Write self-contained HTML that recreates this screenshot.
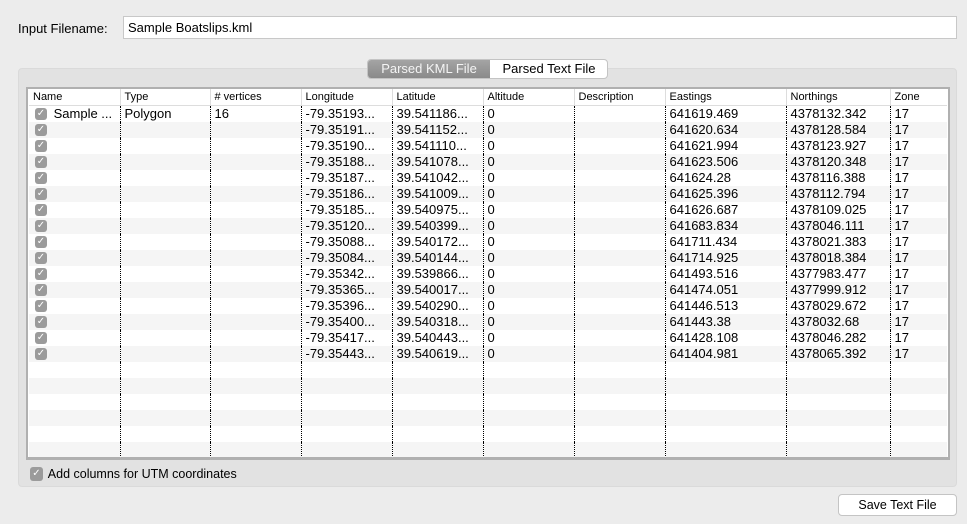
<!DOCTYPE html>
<html><head><style>
*{margin:0;padding:0;box-sizing:border-box}
body{width:967px;height:524px;background:#ececec;font-family:"Liberation Sans",sans-serif;font-size:13px;color:#000;position:relative;overflow:hidden}
.abs{position:absolute}
.cb{display:inline-block;width:12px;height:12px;background:#9b9b9b;border-radius:3px;color:#fff;font-size:10px;line-height:12px;text-align:center;vertical-align:top;margin:2px 3px 0 2px}
table{border-collapse:collapse;table-layout:fixed;position:absolute;left:1px;top:0px;width:918px}
td,th{height:16px;padding:0 4px;white-space:nowrap;overflow:hidden;font-size:13px;line-height:16px;text-align:left;font-weight:normal;border-left:1px dotted #000}
th{font-size:11px;border-left:1px solid #ddd;background:#fff;height:16px;border-bottom:1px solid #ddd}
td:first-child,th:first-child{border-left:none}
tr.s td{background:#f5f5f5}
tr td{background:#fff}
</style></head><body>
<div class="abs" style="left:18px;top:21px">Input Filename:</div>
<div class="abs" style="left:123px;top:16px;width:834px;height:23px;background:#fff;border:1px solid #c8c8c8;padding:3px 0 0 4px">Sample Boatslips.kml</div>
<div class="abs" style="left:18px;top:68px;width:939px;height:419px;background:#e2e2e2;border:1px solid #dadada;border-radius:4px"></div>
<div class="abs" style="left:367px;top:59px;width:241px;height:20px;background:#fff;border:1px solid #c4c4c4;border-radius:4px;overflow:hidden">
 <div class="abs" style="left:0;top:0;width:122px;height:18px;background:linear-gradient(#a4a4a4,#8a8a8a);color:#f4f4f4;text-align:center;line-height:18px">Parsed KML File</div>
 <div class="abs" style="left:122px;top:0;width:118px;height:18px;text-align:center;line-height:18px">Parsed Text File</div>
</div>
<div class="abs" style="left:26px;top:87px;width:924px;height:373px;background:#fff;border:2px solid #b0b0b0;border-bottom-width:3px;overflow:hidden">
<table>
<colgroup><col style="width:91px"><col style="width:90px"><col style="width:91px"><col style="width:91px"><col style="width:91px"><col style="width:91px"><col style="width:91px"><col style="width:121px"><col style="width:104px"><col style="width:57px"></colgroup>
<tr><th>Name</th><th>Type</th><th># vertices</th><th>Longitude</th><th>Latitude</th><th>Altitude</th><th>Description</th><th>Eastings</th><th>Northings</th><th>Zone</th></tr>
<tr><td><span class="cb">✓</span> Sample ...</td><td>Polygon</td><td>16</td><td>-79.35193...</td><td>39.541186...</td><td>0</td><td></td><td>641619.469</td><td>4378132.342</td><td>17</td></tr>
<tr class="s"><td><span class="cb">✓</span></td><td></td><td></td><td>-79.35191...</td><td>39.541152...</td><td>0</td><td></td><td>641620.634</td><td>4378128.584</td><td>17</td></tr>
<tr><td><span class="cb">✓</span></td><td></td><td></td><td>-79.35190...</td><td>39.541110...</td><td>0</td><td></td><td>641621.994</td><td>4378123.927</td><td>17</td></tr>
<tr class="s"><td><span class="cb">✓</span></td><td></td><td></td><td>-79.35188...</td><td>39.541078...</td><td>0</td><td></td><td>641623.506</td><td>4378120.348</td><td>17</td></tr>
<tr><td><span class="cb">✓</span></td><td></td><td></td><td>-79.35187...</td><td>39.541042...</td><td>0</td><td></td><td>641624.28</td><td>4378116.388</td><td>17</td></tr>
<tr class="s"><td><span class="cb">✓</span></td><td></td><td></td><td>-79.35186...</td><td>39.541009...</td><td>0</td><td></td><td>641625.396</td><td>4378112.794</td><td>17</td></tr>
<tr><td><span class="cb">✓</span></td><td></td><td></td><td>-79.35185...</td><td>39.540975...</td><td>0</td><td></td><td>641626.687</td><td>4378109.025</td><td>17</td></tr>
<tr class="s"><td><span class="cb">✓</span></td><td></td><td></td><td>-79.35120...</td><td>39.540399...</td><td>0</td><td></td><td>641683.834</td><td>4378046.111</td><td>17</td></tr>
<tr><td><span class="cb">✓</span></td><td></td><td></td><td>-79.35088...</td><td>39.540172...</td><td>0</td><td></td><td>641711.434</td><td>4378021.383</td><td>17</td></tr>
<tr class="s"><td><span class="cb">✓</span></td><td></td><td></td><td>-79.35084...</td><td>39.540144...</td><td>0</td><td></td><td>641714.925</td><td>4378018.384</td><td>17</td></tr>
<tr><td><span class="cb">✓</span></td><td></td><td></td><td>-79.35342...</td><td>39.539866...</td><td>0</td><td></td><td>641493.516</td><td>4377983.477</td><td>17</td></tr>
<tr class="s"><td><span class="cb">✓</span></td><td></td><td></td><td>-79.35365...</td><td>39.540017...</td><td>0</td><td></td><td>641474.051</td><td>4377999.912</td><td>17</td></tr>
<tr><td><span class="cb">✓</span></td><td></td><td></td><td>-79.35396...</td><td>39.540290...</td><td>0</td><td></td><td>641446.513</td><td>4378029.672</td><td>17</td></tr>
<tr class="s"><td><span class="cb">✓</span></td><td></td><td></td><td>-79.35400...</td><td>39.540318...</td><td>0</td><td></td><td>641443.38</td><td>4378032.68</td><td>17</td></tr>
<tr><td><span class="cb">✓</span></td><td></td><td></td><td>-79.35417...</td><td>39.540443...</td><td>0</td><td></td><td>641428.108</td><td>4378046.282</td><td>17</td></tr>
<tr class="s"><td><span class="cb">✓</span></td><td></td><td></td><td>-79.35443...</td><td>39.540619...</td><td>0</td><td></td><td>641404.981</td><td>4378065.392</td><td>17</td></tr>
<tr><td></td><td></td><td></td><td></td><td></td><td></td><td></td><td></td><td></td><td></td></tr>
<tr class="s"><td></td><td></td><td></td><td></td><td></td><td></td><td></td><td></td><td></td><td></td></tr>
<tr><td></td><td></td><td></td><td></td><td></td><td></td><td></td><td></td><td></td><td></td></tr>
<tr class="s"><td></td><td></td><td></td><td></td><td></td><td></td><td></td><td></td><td></td><td></td></tr>
<tr><td></td><td></td><td></td><td></td><td></td><td></td><td></td><td></td><td></td><td></td></tr>
<tr class="s"><td></td><td></td><td></td><td></td><td></td><td></td><td></td><td></td><td></td><td></td></tr>
</table>
</div>
<div class="abs" style="left:30px;top:466px;font-size:12.5px;line-height:16px"><span class="cb" style="width:13px;height:14px;line-height:14px;margin:1px 2px 0 0">✓</span> Add columns for UTM coordinates</div>
<div class="abs" style="left:838px;top:494px;width:119px;height:22px;background:#fff;border:1px solid #c4c4c4;border-radius:4px;text-align:center;line-height:20px;font-size:12.5px">Save Text File</div>
</body></html>
